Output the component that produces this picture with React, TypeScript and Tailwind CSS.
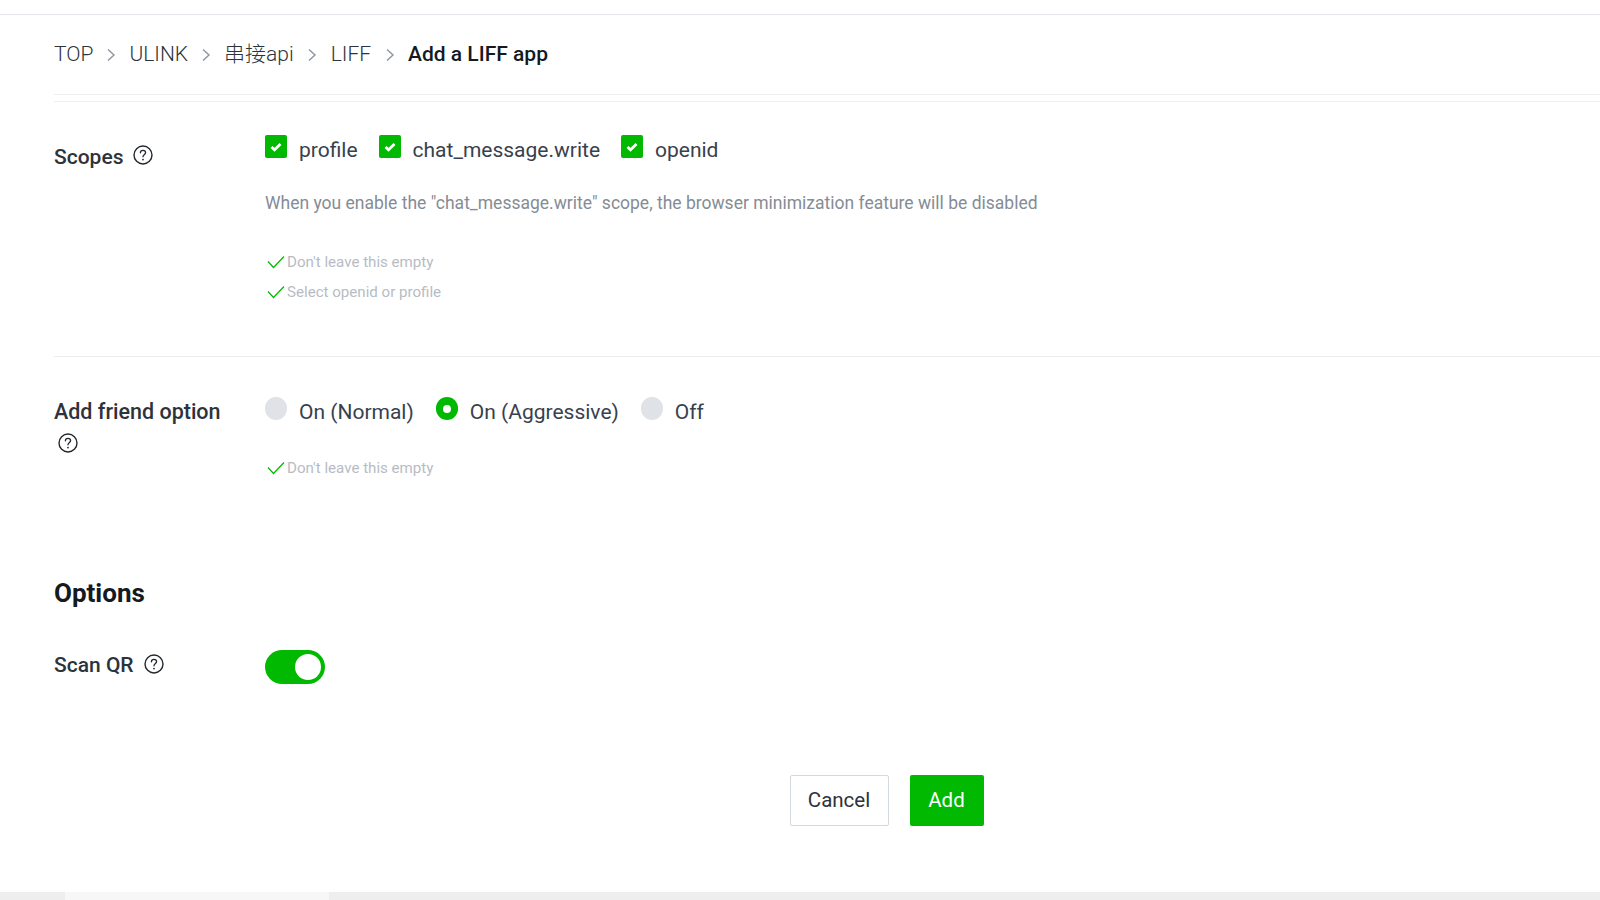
const G = "#00b900";

function Help() {
  return (
    <svg width="22" height="22" viewBox="0 0 22 22" fill="none" className="shrink-0">
      <circle cx="11" cy="11" r="9" stroke="#23282e" strokeWidth="1.4" />
      <path d="M8.4 8.8c0-1.5 1.1-2.5 2.6-2.5s2.6 1 2.6 2.3c0 1.1-.6 1.6-1.4 2.2-.8.6-1.2 1-1.2 2" stroke="#23282e" strokeWidth="1.3" strokeLinecap="round" />
      <circle cx="11" cy="15.6" r=".9" fill="#23282e" />
    </svg>
  );
}

function Chevron() {
  return (
    <svg width="10" height="14" viewBox="0 0 10 14" fill="none" className="shrink-0">
      <path d="M2 1.5 8 7l-6 5.5" stroke="#8d959e" strokeWidth="1.4" />
    </svg>
  );
}

function Check({ label }: { label: string }) {
  return (
    <div className="flex items-start">
      <span className="flex h-[23px] w-[22px] items-center justify-center rounded-[2px] bg-[#00b900]">
        <svg width="12" height="10" viewBox="0 0 12 10" fill="none">
          <path d="M1.5 5 4.5 7.8l6-5.8" stroke="#fff" strokeWidth="2.7" />
        </svg>
      </span>
      <span className="ml-[12px] mt-[2px] text-[21px] leading-[26px] text-[#38414c]">{label}</span>
    </div>
  );
}

function Radio({ label, on }: { label: string; on?: boolean }) {
  return (
    <div className="flex items-start">
      {on ? (
        <span className="flex h-[23px] w-[22px] items-center justify-center rounded-full bg-[#00b900]">
          <span className="h-[8px] w-[8px] rounded-full bg-white" />
        </span>
      ) : (
        <span className="h-[23px] w-[22px] rounded-full bg-[#dfe2e7]" />
      )}
      <span className="ml-[12px] mt-[2px] text-[21px] leading-[26px] text-[#38414c]">{label}</span>
    </div>
  );
}

function Valid({ label }: { label: string }) {
  return (
    <div className="flex h-[30px] items-center">
      <svg width="18" height="14" viewBox="0 0 18 14" fill="none" className="ml-[2px] shrink-0">
        <path d="M1 6.5 6.5 12.5 17 1.5" stroke={G} strokeWidth="1.2" />
      </svg>
      <span className="ml-[2px] text-[15.1px] leading-[20px] text-[#b7bcc4]">{label}</span>
    </div>
  );
}

export default function App() {
  return (
    <div className="flex h-[900px] w-full flex-col overflow-hidden bg-white font-['Roboto','Noto_Sans_CJK_SC',sans-serif]">
      <div className="h-[15px] shrink-0 border-b border-[#e3e7ec]" />
      <div className="flex h-[79px] shrink-0 items-center pl-[54px] text-[21px] font-light text-[#2d333a]">
        <span>TOP</span>
        <span className="mx-[13px]"><Chevron /></span>
        <span>ULINK</span>
        <span className="mx-[13px]"><Chevron /></span>
        <span>串接api</span>
        <span className="ml-[13px] mr-[14px]"><Chevron /></span>
        <span>LIFF</span>
        <span className="ml-[14px] mr-[13px]"><Chevron /></span>
        <span className="font-medium text-[#141a20]">Add a LIFF app</span>
      </div>
      <div className="ml-[54px] flex-1">
        <div className="h-[8px] border-y border-t-[#efefef] border-b-[#efefef]" />
        <div className="flex h-[255px] border-b border-[#ededed] pt-[33px]">
          <div className="flex w-[211px] shrink-0 items-start gap-[9px] pt-[9px]">
            <span className="text-[21px] font-medium leading-[26px] text-[#2d333a]">Scopes</span>
            <Help />
          </div>
          <div>
            <div className="flex gap-[21px]">
              <Check label="profile" />
              <Check label="chat_message.write" />
              <Check label="openid" />
            </div>
            <p className="mt-[27px] text-[17.5px] leading-[26px] text-[#858c95]">
              When you enable the "chat_message.write" scope, the browser minimization feature will be disabled
            </p>
            <div className="mt-[31px]">
              <Valid label="Don't leave this empty" />
              <Valid label="Select openid or profile" />
            </div>
          </div>
        </div>
        <div className="flex h-[221px] pt-[40px]">
          <div className="w-[211px] shrink-0 pt-[2px]">
            <div className="text-[21.5px] font-medium leading-[26px] text-[#2d333a]">Add friend option</div>
            <div className="mt-[7px] pl-[3px]"><Help /></div>
          </div>
          <div>
            <div className="flex gap-[22px]">
              <Radio label="On (Normal)" />
              <Radio label="On (Aggressive)" on />
              <Radio label="Off" />
            </div>
            <div className="mt-[28px]"><Valid label="Don't leave this empty" /></div>
          </div>
        </div>
        <h2 className="-mt-[1px] text-[26px] font-bold leading-[32px] text-[#141a20]">Options</h2>
        <div className="mt-[41px] flex h-[34px]">
          <div className="flex w-[211px] shrink-0 items-start gap-[9px] pt-[2px]">
            <span className="text-[21px] font-medium leading-[26px] text-[#2d333a]">Scan QR</span>
            <span className="mt-[1px]"><Help /></span>
          </div>
          <div className="relative h-[34px] w-[60px] rounded-full bg-[#00b900]">
            <span className="absolute right-[4px] top-[4px] h-[26px] w-[26px] rounded-full bg-white" />
          </div>
        </div>
        <div className="mt-[91px] flex justify-center gap-[21px] pl-[119px]">
          <button className="h-[51px] w-[99px] rounded-[2px] border border-[#d4d9df] bg-white text-[20.5px] text-[#2d333a]">Cancel</button>
          <button className="h-[51px] w-[74px] rounded-[2px] bg-[#00b900] text-[20.5px] text-white">Add</button>
        </div>
      </div>
      <div className="flex h-[8px] shrink-0 bg-[#eeeeee]">
        <div className="ml-[65px] h-full w-[264px] bg-[#f7f7f7]" />
      </div>
    </div>
  );
}
